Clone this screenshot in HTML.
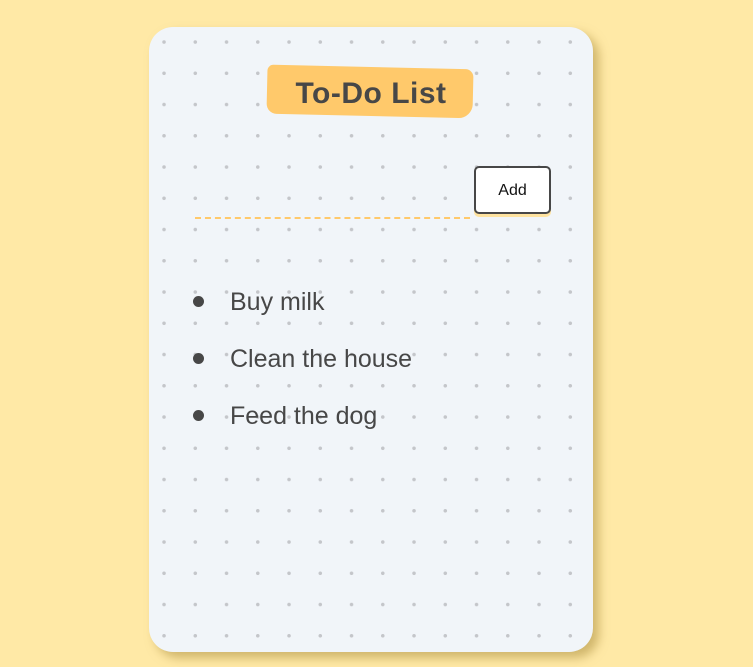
<!DOCTYPE html>
<html><head><style>
html,body{margin:0;padding:0;}
body{width:753px;height:667px;background:#ffe9a6;position:relative;overflow:hidden;font-family:"Comic Sans MS","Liberation Sans",sans-serif;}
.card{position:absolute;left:149px;top:27px;width:444px;height:625px;border-radius:24px;background-color:#f1f5f9;
background-image:radial-gradient(circle,#c4c6ca 1.6px,transparent 2px);background-size:31.25px 31.25px;background-position:-0.6px -0.6px;
box-shadow:6px 6px 10px rgba(170,140,60,.55);}
.title{position:absolute;left:267px;top:67px;width:206px;height:49px;background:#ffc96b;border-radius:6px 8px 14px 10px;transform:rotate(1.3deg);}
.tt{position:absolute;left:266px;top:77px;width:210px;text-align:center;font-size:30px;font-weight:bold;color:#474747;letter-spacing:0.5px;}
.btn{position:absolute;left:474px;top:166px;width:73px;height:44px;border:2px solid #474747;border-radius:5px;background:#fff;box-shadow:0 3px 0 #ffe3a0;font-size:16px;text-align:center;line-height:46px;color:#111;}
.line{position:absolute;left:195px;top:217px;width:275px;border-top:2px dashed #ffc96b;}
.it{position:absolute;left:230px;font-size:25px;color:#474747;line-height:30px;}
.b{position:absolute;left:193px;width:11px;height:11px;border-radius:50%;background:#474747;}
</style></head><body>
<div class="card"></div>
<div class="title"></div>
<div class="tt">To-Do List</div>
<div class="line"></div>
<div class="btn">Add</div>
<div class="b" style="top:296px"></div><div class="it" style="top:287px">Buy milk</div>
<div class="b" style="top:353px"></div><div class="it" style="top:344px">Clean the house</div>
<div class="b" style="top:410px"></div><div class="it" style="top:401px">Feed the dog</div>
</body></html>
